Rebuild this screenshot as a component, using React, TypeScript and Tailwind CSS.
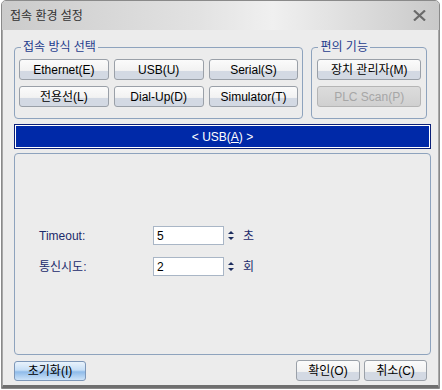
import React from 'react';

const btn =
  "flex items-center justify-center h-[21px] rounded-[3px] border border-[#9aa0a8] text-[12px] text-black bg-[linear-gradient(to_bottom,#fbfbfb_0%,#f2f2f2_55%,#d3d9e3_60%,#d3d9e3_100%)]";

const Btn: React.FC<{ label: React.ReactNode; className?: string }> = ({ label, className = '' }) => (
  <div className={`${btn} ${className}`}>{label}</div>
);

const GroupBox: React.FC<{ title: string; className?: string; children: React.ReactNode }> = ({ title, className = '', children }) => (
  <div className={`relative rounded-[4px] border border-[#8ea3bd] ${className}`}>
    <span className="absolute -top-[9px] left-[6px] bg-[#ececec] px-[2px] text-[12px] leading-[16px] text-[#1f3c8c]">{title}</span>
    {children}
  </div>
);

const Spinner: React.FC<{ value: string; unit: string }> = ({ value, unit }) => (
  <div className="flex items-center">
    <div className="flex h-[19px] w-[71px] items-center border border-[#a9b6c6] bg-white pl-[3px] text-[12px] text-black">{value}</div>
    <div className="flex w-[14px] flex-col items-center justify-center gap-[3px]">
      <div className="h-0 w-0 border-x-[3px] border-b-[3px] border-x-transparent border-b-[#1c2d5e]" />
      <div className="h-0 w-0 border-x-[3px] border-t-[3px] border-x-transparent border-t-[#1c2d5e]" />
    </div>
    <span className="ml-[5px] text-[12px] text-[#1b2a6b]">{unit}</span>
  </div>
);

export default function App() {
  return (
    <div className="h-[390px] w-[442px] bg-white font-['Liberation_Sans','Noto_Sans_CJK_KR',sans-serif] text-[12px]">
      <div className="ml-px h-[389px] w-[439px] overflow-hidden rounded-t-[5px] border border-[#8a8a8a] bg-[#ececec]">
        {/* title bar */}
        <div className="flex h-[29px] items-center justify-between bg-[linear-gradient(to_right,#cbcbcb_0%,#e2e2e2_45%,#f0f0f0_62%,#c9c9c9_100%)] pl-[8px] pr-[13px]">
          <span className="text-[12px] text-[#333]">접속 환경 설정</span>
          <svg width="13" height="11" viewBox="0 0 13 11">
            <path d="M1 0.5 L12 10.5 M12 0.5 L1 10.5" stroke="#6a6a6a" strokeWidth="2.2" />
          </svg>
        </div>

        <div className="flex h-[358px] flex-col border-x border-b-[3px] border-x-[#a8a8a8] border-b-[#6f6f6f] px-[11px] pt-[17px]">
          <div className="flex gap-[8px]">
            <GroupBox title="접속 방식 선택" className="h-[72px] w-[293px]">
              <div className="grid grid-cols-3 gap-x-[5px] gap-y-[6px] px-[4px] pt-[11px]">
                <Btn label="Ethernet(E)" />
                <Btn label="USB(U)" />
                <Btn label="Serial(S)" />
                <Btn label="전용선(L)" />
                <Btn label="Dial-Up(D)" />
                <Btn label="Simulator(T)" />
              </div>
            </GroupBox>
            <GroupBox title="편의 기능" className="h-[72px] w-[117px]">
              <div className="flex flex-col gap-[6px] px-[5px] pt-[11px]">
                <Btn label="장치 관리자(M)" />
                <div className="flex h-[21px] items-center justify-center rounded-[3px] border border-[#b5b5b5] bg-[linear-gradient(to_bottom,#dcdcdc,#d0d0d0)] text-[12px] text-[#a6a6a6]">PLC Scan(P)</div>
              </div>
            </GroupBox>
          </div>

          <div className="mt-[5px] h-[25px] w-[417px] border border-[#0a1f78] bg-white p-px">
            <div className="flex h-full items-center justify-center bg-[#0029a8] text-[12px] text-white">
              &lt; USB(<span className="underline">A</span>) &gt;
            </div>
          </div>

          <div className="mt-[4px] flex h-[202px] w-[417px] flex-col gap-[12px] rounded-[4px] border border-[#8ea3bd] pl-[24px] pt-[72px]">
            <div className="flex items-center">
              <span className="w-[114px] text-[12px] text-[#1b2a6b]">Timeout:</span>
              <Spinner value="5" unit="초" />
            </div>
            <div className="flex items-center">
              <span className="w-[114px] text-[12px] text-[#1b2a6b]">통신시도:</span>
              <Spinner value="2" unit="회" />
            </div>
          </div>

          <div className="mt-[5px] flex items-center">
            <div className="flex h-[20px] w-[72px] items-center justify-center rounded-[3px] border border-[#7d97b8] bg-[linear-gradient(to_bottom,#e9f3fc_0%,#c6def6_45%,#8fbbe9_55%,#cde3f8_100%)] text-[12px] text-black">초기화(I)</div>
            <div className="flex-1" />
            <Btn label="확인(O)" className="h-[20px] w-[64px]" />
            <Btn label="취소(C)" className="ml-[4px] h-[20px] w-[63px]" />
          </div>
        </div>
      </div>
    </div>
  );
}
